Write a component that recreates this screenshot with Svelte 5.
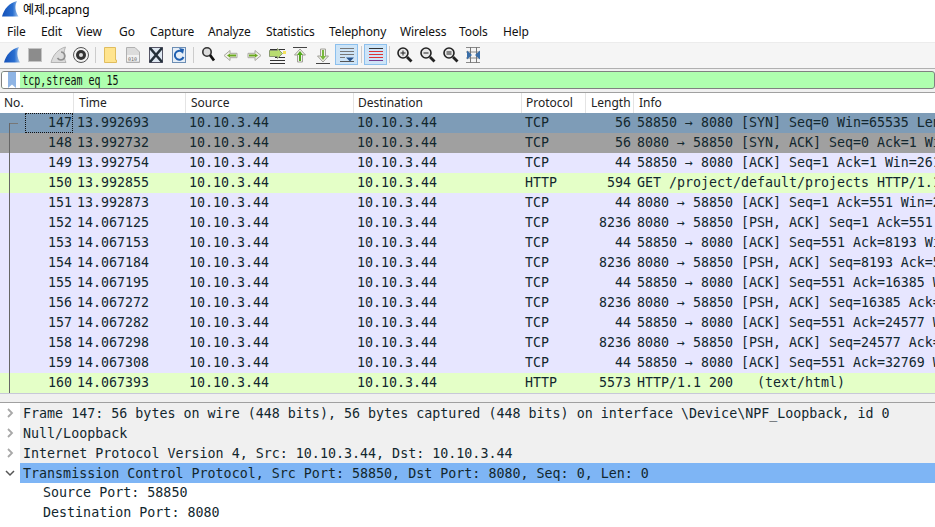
<script>
  const menus = [['File',34],['Edit',35],['View',43],['Go',31],['Capture',58],['Analyze',58],['Statistics',63],['Telephony',71],['Wireless',59],['Tools',44],['Help',30]];
  const d = '10.10.3.44';
  const rows = [
    [147,'13.992693','TCP',56,'58850 → 8080 [SYN] Seq=0 Win=65535 Len=0 MSS=65495 WS=256','sel'],
    [148,'13.992732','TCP',56,'8080 → 58850 [SYN, ACK] Seq=0 Ack=1 Win=65535 Len=0','rel'],
    [149,'13.992754','TCP',44,'58850 → 8080 [ACK] Seq=1 Ack=1 Win=261120 Len=0','tcp'],
    [150,'13.992855','HTTP',594,'GET /project/default/projects HTTP/1.1 ','http'],
    [151,'13.992873','TCP',44,'8080 → 58850 [ACK] Seq=1 Ack=551 Win=261120 Len=0','tcp'],
    [152,'14.067125','TCP',8236,'8080 → 58850 [PSH, ACK] Seq=1 Ack=551 Win=261120','tcp'],
    [153,'14.067153','TCP',44,'58850 → 8080 [ACK] Seq=551 Ack=8193 Win=261120','tcp'],
    [154,'14.067184','TCP',8236,'8080 → 58850 [PSH, ACK] Seq=8193 Ack=551 Win=261120','tcp'],
    [155,'14.067195','TCP',44,'58850 → 8080 [ACK] Seq=551 Ack=16385 Win=261120','tcp'],
    [156,'14.067272','TCP',8236,'8080 → 58850 [PSH, ACK] Seq=16385 Ack=551 Win=261120','tcp'],
    [157,'14.067282','TCP',44,'58850 → 8080 [ACK] Seq=551 Ack=24577 Win=261120','tcp'],
    [158,'14.067298','TCP',8236,'8080 → 58850 [PSH, ACK] Seq=24577 Ack=551 Win=261120','tcp'],
    [159,'14.067308','TCP',44,'58850 → 8080 [ACK] Seq=551 Ack=32769 Win=261120','tcp'],
    [160,'14.067393','HTTP',5573,'HTTP/1.1 200   (text/html)','http'],
  ];
  const heads = [['No.','c0'],['Time','c1'],['Source','c2'],['Destination','c3'],['Protocol','c4'],['Length','c5'],['Info','c6']];
</script>

<div class="win">
  <div class="title">
    <svg class="shark" width="18" height="18" viewBox="0 0 18 18">
      <defs><linearGradient id="sg" x1="0" x2="1" y1="0" y2="0"><stop offset="0" stop-color="#1450b8"/><stop offset=".65" stop-color="#2a6fd0"/><stop offset="1" stop-color="#a8c8ec"/></linearGradient></defs>
      <path d="M1 16.5 C3 9 8 3 16 1 C13.5 6 14 11 17.5 16.5 Z" fill="url(#sg)"/>
    </svg>
    <span>예제.pcapng</span>
  </div>
  <div class="menu">
    {#each menus as m}<span style="width:{m[1]}px">{m[0]}</span>{/each}
  </div>
  <div class="toolbar">
    <svg width="510" height="26" viewBox="0 0 510 26">
      <!-- shark -->
      <path d="M4 22.5 C6 15 11 9 19 7 C16.5 12 17 17 20 22.5 Z" fill="url(#sg)"/>
      <!-- stop -->
      <rect x="28.5" y="8.5" width="13" height="13" fill="#8c8c8c" stroke="#c4c4c4"/>
      <!-- restart shark -->
      <path d="M51 22.5 C53 15 58 9 65.5 7 C63.5 12 63.5 17 66 22.5 Z" fill="#dcdcdc" stroke="#b4b4b4"/><path d="M61 12 a4 4 0 1 1 -3.5 6" fill="none" stroke="#8f8f8f" stroke-width="1.6"/>
      <!-- options gear -->
      <circle cx="81" cy="15" r="7.5" fill="#f2f2f2" stroke="#555"/><circle cx="81" cy="15" r="5" fill="#333"/><circle cx="81" cy="15" r="2" fill="#ddd"/>
      <line x1="95.5" y1="7" x2="95.5" y2="23" stroke="#ccc"/>
      <!-- open -->
      <path d="M104.5 7.5 H115.5 V20 H116.5 V22.5 H104.5 Z" fill="#ffe48e" stroke="#e0bd5e"/>
      <!-- pcap file -->
      <path d="M126.5 7.5 H135 L139.5 12 V22.5 H126.5 Z" fill="#dcdcdc" stroke="#b0b0b0"/><rect x="127" y="15" width="12" height="6" fill="#f2f2f2"/><text class="tiny" x="128" y="20.5">010</text>
      <!-- close x -->
      <rect x="149.5" y="7.5" width="13" height="15" fill="#dfe8f2" stroke="#556"/><path d="M150 8 L162 22 M162 8 L150 22" stroke="#24303a" stroke-width="2.6"/>
      <!-- reload -->
      <rect x="172.5" y="7.5" width="13" height="15" fill="#e6eef7" stroke="#6d8eb4"/><path d="M182.5 12 a4.5 4.5 0 1 0 1 5" fill="none" stroke="#1f5fb0" stroke-width="2"/><path d="M179 8 l5 1 -1 5 z" fill="#1f5fb0"/>
      <line x1="193.5" y1="7" x2="193.5" y2="23" stroke="#ccc"/>
      <!-- find -->
      <circle cx="207" cy="12" r="4.2" fill="#dcdcdc" stroke="#333" stroke-width="1.6"/><path d="M210 15 L214 20.5" stroke="#111" stroke-width="2.8"/>
      <!-- back / fwd -->
      <path d="M224 15.5 l6 -5 v2.8 h7 v4.4 h-7 v2.8 z" fill="#f0f0e8" stroke="#a8a8a0"/><path d="M227 15.5 l3 -2 v1 h6 v2 h-6 v1 z" fill="#6aa81e"/>
      <path d="M261 15.5 l-6 -5 v2.8 h-7 v4.4 h7 v2.8 z" fill="#f0f0e8" stroke="#a8a8a0"/><path d="M258 15.5 l-3 -2 v1 h-6 v2 h6 v1 z" fill="#6aa81e"/>
      <!-- goto -->
      <path d="M270 9.5 h15 M275 17.5 h10 M270 20.5 h15 M270 23.5 h15" stroke="#333" fill="none"/>
      <path d="M269.5 10.5 h8 v-2 l5 5 -5 5 v-2 h-8 z" fill="#b8dc70" stroke="#8a9a70"/><rect x="283" y="11" width="3" height="3" fill="#f4e25a"/>
      <!-- first -->
      <path d="M293 7.5 h14" stroke="#444"/><path d="M300 9 l5.5 6 h-3 v7 h-5 v-7 h-3 z" fill="#f0f0e8" stroke="#a0a098"/><path d="M300 11 l3 4 h-2 v6 h-2 v-6 h-2 z" fill="#52a81e"/>
      <!-- last -->
      <path d="M316 23.5 h14" stroke="#444"/><path d="M323 22 l5.5 -6 h-3 v-7 h-5 v7 h-3 z" fill="#f0f0e8" stroke="#a0a098"/><path d="M323 20 l3 -4 h-2 v-6 h-2 v6 h-2 z" fill="#7ab83e"/>
      <!-- autoscroll active -->
      <rect x="335.5" y="4.5" width="22" height="20" fill="#cde4f7" stroke="#8cc0ee"/>
      <path d="M340 8.5 h14 M340 11.5 h14 M340 14.5 h14 M340 17.5 h5" stroke="#777"/><path d="M340 21.5 h14" stroke="#555"/><path d="M346 17.5 h8 l-4 4 z" fill="#27548e"/>
      <line x1="361.5" y1="6" x2="361.5" y2="23" stroke="#ccc"/>
      <!-- colorize active -->
      <rect x="364.5" y="4.5" width="22" height="20" fill="#cde4f7" stroke="#8cc0ee"/>
      <path d="M369 8.5 h14" stroke="#333"/><path d="M369 11.5 h14 M369 14.5 h14" stroke="#d33"/><path d="M369 17.5 h14" stroke="#d33"/><path d="M369 20.5 h14" stroke="#743a8a"/>
      <line x1="389.5" y1="6" x2="389.5" y2="23" stroke="#ccc"/>
      <!-- zoom -->
      <g fill="none" stroke="#222">
        <circle cx="403" cy="13" r="5" fill="#e8e8e8" stroke-width="1.6"/><path d="M407 17 L411.5 21.5" stroke-width="2.8"/><path d="M400.5 13 h5 M403 10.5 v5"/>
        <circle cx="426" cy="13" r="5" fill="#e8e8e8" stroke-width="1.6"/><path d="M430 17 L434.5 21.5" stroke-width="2.8"/><path d="M423.5 13 h5"/>
        <circle cx="449" cy="13" r="5" fill="#e8e8e8" stroke-width="1.6"/><path d="M453 17 L457.5 21.5" stroke-width="2.8"/><path d="M446.5 12 h5 M446.5 14 h5"/>
      </g>
      <!-- resize -->
      <path d="M466 7.5 h14 M466 22.5 h14 M466 12 h14 M466 18 h14" stroke="#8a8a8a"/><path d="M470.5 7 v16 M476.5 7 v16" stroke="#777"/>
      <path d="M467 10.5 l5 4.5 -5 4.5 z M480 10.5 l-5 4.5 5 4.5 z" fill="#3a6ea8"/>
    </svg>
  </div>
  <div class="filter">
    <div class="fbox">
      <div class="bm"><svg width="10" height="16" viewBox="0 0 10 16"><path d="M1 0 H9 V16 L5 12.5 L1 16 Z" fill="#8fb4e4"/></svg></div>
      <span>tcp,stream eq 15</span>
    </div>
  </div>
  <div class="thead">
    {#each heads as h}<div class="th {h[1]}">{h[0]}</div>{/each}
  </div>
  <div class="list">
    {#each rows as r, i}
      <div class="row {r[5]}">
        <div class="mark">
          {#if i === 0}<i class="tick"></i>{/if}
          <i class="stem" class:first={i === 0}></i>
        </div>
        <div class="no" class:focus={i === 0}>{r[0]}</div>
        <div class="cell c1v">{r[1]}</div>
        <div class="cell c2v">{d}</div>
        <div class="cell c3v">{d}</div>
        <div class="cell c4v">{r[2]}</div>
        <div class="len">{r[3]}</div>
        <div class="cell c6v">{r[4]}</div>
      </div>
    {/each}
  </div>
  <div class="split"></div>
  <div class="detail">
    <div class="dr"><svg class="chev" width="10" height="10" viewBox="0 0 10 10"><path d="M3 1 L7 5 L3 9" fill="none" stroke="#a8a8a8" stroke-width="1.8"/></svg><span class="grey">Frame 147: 56 bytes on wire (448 bits), 56 bytes captured (448 bits) on interface \Device\NPF_Loopback, id 0</span></div>
    <div class="dr"><svg class="chev" width="10" height="10" viewBox="0 0 10 10"><path d="M3 1 L7 5 L3 9" fill="none" stroke="#a8a8a8" stroke-width="1.8"/></svg><span class="grey">Null/Loopback</span></div>
    <div class="dr"><svg class="chev" width="10" height="10" viewBox="0 0 10 10"><path d="M3 1 L7 5 L3 9" fill="none" stroke="#a8a8a8" stroke-width="1.8"/></svg><span class="grey">Internet Protocol Version 4, Src: 10.10.3.44, Dst: 10.10.3.44</span></div>
    <div class="dr"><svg class="chev" width="10" height="10" viewBox="0 0 10 10"><path d="M1 3 L5 7 L9 3" fill="none" stroke="#555" stroke-width="1.5"/></svg><span class="hl">Transmission Control Protocol, Src Port: 58850, Dst Port: 8080, Seq: 0, Len: 0</span></div>
    <div class="dr sub">Source Port: 58850</div>
    <div class="dr sub">Destination Port: 8080</div>
  </div>
</div>

<style>
  :global(body) { margin: 0; background: #fff; overflow: hidden; }
  .win { width: 935px; height: 527px; overflow: hidden; display: flex; flex-direction: column; font-family: "Noto Sans", "Noto Sans CJK KR", sans-serif; color: #000; background: #fff; }
  .title { height: 22px; display: flex; align-items: center; gap: 4px; padding-left: 1px; font-size: 12px; flex: none; }
  .title span { position: relative; top: -2px; font-size: 12px; letter-spacing: -.1px; }
  .shark { flex: none; position: relative; top: -2px; }
  .menu { height: 20px; display: flex; flex: none; align-items: center; font-size: 12px; padding: 0 0 2px 7px; box-sizing: border-box; color: #111; }
  .menu span { flex: none; letter-spacing: -.1px; }
  .toolbar { height: 27px; flex: none; background: #f5f5f5; border-top: 1px solid #ececec; border-bottom: 1px solid #b0b0b0; box-sizing: border-box; overflow: hidden; }
  .toolbar svg { display: block; margin-top: -3px; }
  .tiny { font: 5px "DejaVu Sans Mono", monospace; fill: #666; }
  .filter { height: 23px; flex: none; background: #f0f0f0; box-sizing: border-box; padding: 2px 0 0 1px; }
  .fbox { height: 18px; box-sizing: border-box; background: #afffaf; border: 1px solid #808080; border-radius: 3px; display: flex; align-items: center; overflow: hidden; }
  .bm { width: 18px; height: 16px; flex: none; background: #fff; display: flex; justify-content: center; padding-left: 1px; box-sizing: border-box; }
  .fbox span { font-family: "DejaVu Sans Mono", monospace; font-size: 13.33px; transform: scaleX(.75); transform-origin: left center; color: #111; padding-left: 3px; white-space: pre; }
  .thead { height: 21px; flex: none; display: flex; box-sizing: border-box; border-top: 1px solid #a0a0a0; background: #fff; font-size: 12px; color: #222; }
  .th { box-sizing: border-box; border-right: 1px solid #e4e4e4; line-height: 19px; flex: none; }
  .c0 { width: 74px; padding-left: 4px; }
  .c1 { width: 112px; padding-left: 5px; }
  .c2 { width: 168px; padding-left: 5px; }
  .c3 { width: 168px; padding-left: 4px; }
  .c4 { width: 64px; padding-left: 4px; }
  .c5 { width: 48px; padding-left: 5px; }
  .c6 { flex: 1; border-right: 0; padding-left: 5px; }
  .list { flex: none; font-family: "DejaVu Sans Mono", monospace; font-size: 13.29px; color: #12272e; }
  .row { height: 20px; display: flex; line-height: 20px; white-space: pre; overflow: hidden; }
  .sel { background: #7e9cb7; }
  .rel { background: #a0a0a0; }
  .tcp { background: #e7e6ff; }
  .http { background: #e4ffc7; }
  .mark { width: 25px; flex: none; position: relative; }
  .stem { position: absolute; left: 9px; top: 0; bottom: 0; width: 1px; background: #666; }
  .stem.first { top: 10px; }
  .tick { position: absolute; left: 9px; width: 9px; top: 10px; height: 1px; background: #777; }
  .no { width: 48px; flex: none; box-sizing: border-box; text-align: right; padding-right: 1px; height: 20px; }
  .no.focus { outline: 1px dotted #111; outline-offset: -1px; }
  .cell { flex: none; box-sizing: border-box; padding-left: 4px; }
  .c1v { width: 112px; }
  .c2v { width: 168px; }
  .c3v { width: 168px; padding-left: 4px; }
  .c4v { width: 64px; padding-left: 4px; }
  .len { width: 47px; flex: none; box-sizing: border-box; text-align: right; padding-right: 1px; }
  .c6v { width: 320px; padding-left: 5px; }
  .split { flex: none; box-sizing: border-box; height: 10px; background: #f0f0f0; border-top: 1px solid #c8c8d8; border-bottom: 1px solid #a0a0a0; }
  .detail { flex: 1; font-family: "DejaVu Sans Mono", monospace; font-size: 13.33px; color: #12272e; overflow: hidden; white-space: nowrap; }
  .dr { height: 20px; line-height: 22px; display: flex; align-items: center; }
  .chev { flex: none; margin: 0 5px 0 5px; }
  .dr span { padding-left: 3px; flex: 1; height: 20px; }
  .grey { background: #f0f0f0; }
  .hl { background: #7eb5f5; }
  .sub { padding-left: 43px; }
</style>
